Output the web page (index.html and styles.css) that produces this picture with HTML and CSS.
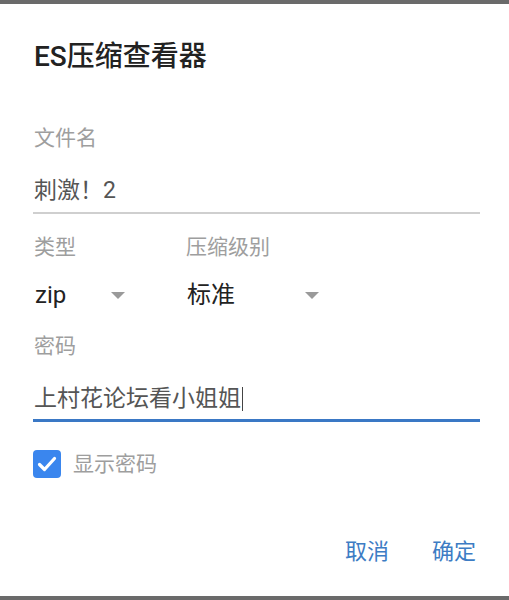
FILE: index.html
```html
<!DOCTYPE html>
<html lang="zh-CN">
<head>
<meta charset="utf-8">
<title>ES压缩查看器</title>
<link rel="stylesheet" href="styles.css">
</head>
<body>
<div class="screen">
  <div class="dialog">
    <h1 class="title">ES压缩查看器</h1>

    <div class="field">
      <div class="label label-first">文件名</div>
      <div class="value value-under">刺激！2</div>
    </div>

    <div class="row">
      <div class="col col-type">
        <div class="label">类型</div>
        <div class="select select-type"><span class="sel-text">zip</span><span class="arrow"></span></div>
      </div>
      <div class="col col-level">
        <div class="label">压缩级别</div>
        <div class="select select-level"><span class="sel-text">标准</span><span class="arrow"></span></div>
      </div>
    </div>

    <div class="field">
      <div class="label">密码</div>
      <div class="value value-focus">上村花论坛看小姐姐<span class="caret"></span></div>
    </div>

    <div class="check-row">
      <span class="checkbox">
        <svg width="28" height="28" viewBox="0 0 28 28"><path d="M6.5 14.5 L11.5 19.5 L21.5 8.5" fill="none" stroke="#fff" stroke-width="3.2" stroke-linecap="round" stroke-linejoin="round"/></svg>
      </span>
      <span class="check-text">显示密码</span>
    </div>

    <div class="actions">
      <span class="btn">取消</span>
      <span class="btn">确定</span>
    </div>
  </div>
</div>
</body>
</html>
```

FILE: styles.css
```css
* { box-sizing: border-box; }
html, body { margin: 0; padding: 0; }
body {
  font-family: "Roboto", "Noto Sans CJK SC", sans-serif;
  background: #ffffff;
}
.screen {
  height: 600px;
  border-top: 4px solid #6a6a6a;
  border-bottom: 4px solid #6a6a6a;
  background: #fff;
}
.dialog {
  padding: 0 29px 0 33px;
}
.title {
  margin: 33px 0 0 0;
  font-size: 28px;
  font-weight: 500;
  line-height: 40px;
  color: #222;
  padding-left: 1px;
}
.label {
  font-size: 21px;
  line-height: 30px;
  color: #9e9e9e;
  margin-top: 18px;
  padding-left: 1px;
}
.label-first { margin-top: 46px; }
.value {
  font-size: 23px;
  line-height: 36px;
  color: #555;
  margin-top: 20px;
  padding-left: 1px;
}
.value-under {
  padding-bottom: 3px;
  border-bottom: 2px solid #cfcfcf;
}
.value-focus {
  padding-bottom: 2px;
  border-bottom: 3px solid #3a78c5;
  display: flex;
  align-items: center;
}
.caret {
  display: inline-block;
  width: 1px;
  height: 24px;
  background: #444;
  margin-left: 1px;
}
.row {
  display: flex;
}
.col-type { width: 152px; }
.col-level { width: 160px; }
.select {
  margin-top: 15px;
  height: 36px;
  display: flex;
  align-items: center;
  justify-content: space-between;
}
.select-type { width: 92px; padding-left: 2px; }
.select-level { width: 134px; padding-left: 2px; }
.sel-text {
  font-size: 24px;
  line-height: 36px;
  color: #222;
}
.arrow {
  width: 0;
  height: 0;
  border-left: 7px solid transparent;
  border-right: 7px solid transparent;
  border-top: 7px solid #9a9a9a;
  margin-top: 1px;
}
.check-row {
  margin-top: 28px;
  height: 28px;
  display: flex;
  align-items: center;
}
.checkbox {
  width: 28px;
  height: 28px;
  border-radius: 4px;
  background: #3a86ee;
  display: block;
}
.checkbox svg { display: block; }
.check-text {
  margin-left: 12px;
  font-size: 21px;
  color: #9e9e9e;
  line-height: 28px;
}
.actions {
  margin-top: 56px;
  display: flex;
  justify-content: flex-end;
  gap: 43px;
  padding-right: 4px;
}
.btn {
  font-size: 22px;
  line-height: 36px;
  color: #3d7cc4;
}
```
